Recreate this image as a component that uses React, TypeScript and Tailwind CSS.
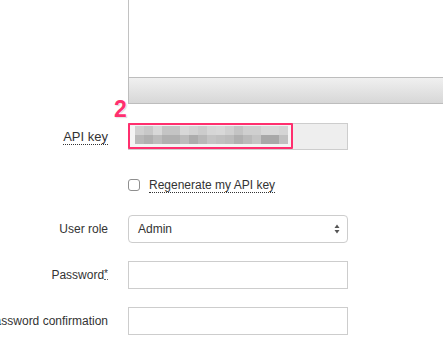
import React from "react";

const TOP_ROW = [
  "bg-[#d0d0d0]", "bg-[#c8c8c8]", "bg-[#d8d8d8]", "bg-[#c4c4c4]", "bg-[#c4c4c4]", "bg-[#d8d8d8]",
  "bg-[#d2d2d2]", "bg-[#cccccc]", "bg-[#d6d6d6]", "bg-[#d8d8d8]", "bg-[#d0d0d0]", "bg-[#c4c4c4]",
  "bg-[#cfcfcf]", "bg-[#cfcfcf]", "bg-[#d8d8d8]", "bg-[#d8d8d8]", "bg-[#d4d4d4]",
];
const BOTTOM_ROW = [
  "bg-[#b8b8b8]", "bg-[#b0b0b0]", "bg-[#bcbcbc]", "bg-[#b0b0b0]", "bg-[#b0b0b0]", "bg-[#bcbcbc]",
  "bg-[#acacac]", "bg-[#b8b8b8]", "bg-[#c4c4c4]", "bg-[#c0c0c0]", "bg-[#bcbcbc]", "bg-[#b0b0b0]",
  "bg-[#bababa]", "bg-[#c4c4c4]", "bg-[#a8a8a8]", "bg-[#a8a8a8]", "bg-[#c0c0c0]",
];

function Label({ children }: { children: React.ReactNode }) {
  return (
    <div className="w-[108px] shrink-0 text-right whitespace-nowrap overflow-visible flex justify-end">
      {children}
    </div>
  );
}

export default function App() {
  return (
    <div
      className="w-[443px] h-[351px] overflow-hidden bg-white text-[12px] text-[#333]"
      style={{ fontFamily: '"Liberation Sans", Arial, sans-serif' }}
    >
      {/* Editor area + toolbar */}
      <div className="ml-[128px]">
        <div className="h-[77px] border-l border-[#c2c2c2] bg-white" />
        <div className="h-[27px] border border-r-0 border-[#bdbdbd] bg-gradient-to-b from-[#f0f0f0] to-[#d7d7d7]" />
      </div>

      {/* API key */}
      <div className="flex items-center gap-[20px] mt-[19px] h-[27px]">
        <Label>
          <span className="text-[13px] leading-[15px] border-b border-dotted border-[#333]">API key</span>
        </Label>
        <div className="relative w-[220px] h-[27px] border border-[#cdcdcd] bg-[#eeeeee]">
          <div className="absolute left-[-1px] top-[-1px] w-[165px] h-[26px] border-[2.5px] border-[#ff2f6e] rounded-[1px] bg-[#f4f4f4] pl-[5px] pt-[0.5px]">
            <div className="flex">
              {TOP_ROW.map((c, i) => (
                <span key={i} className={`w-[9px] h-[9px] ${c}`} />
              ))}
            </div>
            <div className="flex">
              {BOTTOM_ROW.map((c, i) => (
                <span key={i} className={`w-[9px] h-[9px] ${c}`} />
              ))}
            </div>
          </div>
          <span
            className="absolute left-[-15px] top-[-27px] text-[23px] leading-[24px] font-bold text-[#ff2f6e]"
            style={{ fontFamily: '"Liberation Sans", Arial, sans-serif', textShadow: "0 0 2px #fff, 0 0 2px #fff, 1px 1px 1px rgba(0,0,0,0.2)" }}
          >
            2
          </span>
        </div>
      </div>

      {/* Regenerate */}
      <div className="flex items-center gap-[9px] ml-[128px] mt-[25px] h-[20px]">
        <span className="w-[12px] h-[12px] rounded-[3px] border border-[#8f8f8f] bg-white" />
        <span className="leading-[14px] border-b border-dotted border-[#333]">Regenerate my API key</span>
      </div>

      {/* User role */}
      <div className="flex items-center gap-[20px] mt-[20px] h-[28px]">
        <Label>User role</Label>
        <div className="w-[220px] h-[28px] rounded-[4px] border border-[#cdcdcd] bg-white flex items-center justify-between pl-[9px] pr-[7px]">
          <span>Admin</span>
          <svg width="6" height="10" viewBox="0 0 6 10" className="text-[#555]">
            <path d="M3 0.5 L5.5 4 H0.5 Z" fill="currentColor" />
            <path d="M3 9.5 L5.5 6 H0.5 Z" fill="currentColor" />
          </svg>
        </div>
      </div>

      {/* Password */}
      <div className="flex items-center gap-[20px] mt-[18px] h-[28px]">
        <Label>
          <span>
            Password
            <span className="border-b border-dotted border-[#666] text-[10px] align-top">*</span>
          </span>
        </Label>
        <div className="w-[220px] h-[28px] border border-[#cdcdcd] bg-white" />
      </div>

      {/* Password confirmation */}
      <div className="flex items-center gap-[20px] mt-[18px] h-[28px]">
        <Label>Password confirmation</Label>
        <div className="w-[220px] h-[28px] border border-[#cdcdcd] bg-white" />
      </div>
    </div>
  );
}
